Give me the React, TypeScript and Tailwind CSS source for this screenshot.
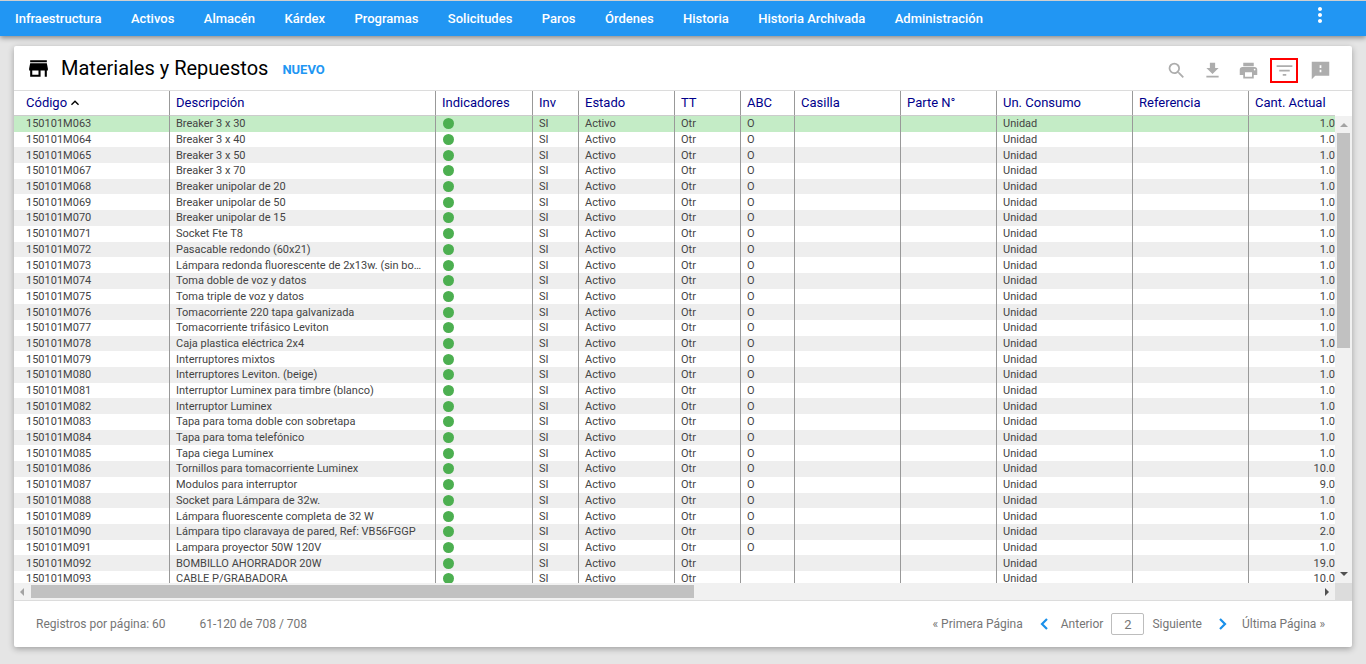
import {
  MdFileDownload,
  MdFilterList,
  MdKeyboardArrowUp,
  MdMoreVert,
  MdPrint,
  MdSearch,
  MdStore,
} from "react-icons/md";

const menu = [
  "Infraestructura",
  "Activos",
  "Almacén",
  "Kárdex",
  "Programas",
  "Solicitudes",
  "Paros",
  "Órdenes",
  "Historia",
  "Historia Archivada",
  "Administración",
];

const columns = [
  { title: "Código", width: "w-[155px]" },
  { title: "Descripción", width: "w-[266px]" },
  { title: "Indicadores", width: "w-[97px]" },
  { title: "Inv", width: "w-[46px]" },
  { title: "Estado", width: "w-[96px]" },
  { title: "TT", width: "w-[66px]" },
  { title: "ABC", width: "w-[54px]" },
  { title: "Casilla", width: "w-[106px]" },
  { title: "Parte N°", width: "w-[96px]" },
  { title: "Un. Consumo", width: "w-[136px]" },
  { title: "Referencia", width: "w-[116px]" },
  { title: "Cant. Actual", width: "" },
];

interface Item {
  code: string;
  name: string;
  abc?: string;
  qty: string;
}

const items: Item[] = [
  { code: "150101M063", name: "Breaker 3 x 30", abc: "O", qty: "1.0" },
  { code: "150101M064", name: "Breaker 3 x 40", abc: "O", qty: "1.0" },
  { code: "150101M065", name: "Breaker 3 x 50", abc: "O", qty: "1.0" },
  { code: "150101M067", name: "Breaker 3 x 70", abc: "O", qty: "1.0" },
  { code: "150101M068", name: "Breaker unipolar de 20", abc: "O", qty: "1.0" },
  { code: "150101M069", name: "Breaker unipolar de 50", abc: "O", qty: "1.0" },
  { code: "150101M070", name: "Breaker unipolar de 15", abc: "O", qty: "1.0" },
  { code: "150101M071", name: "Socket Fte T8", abc: "O", qty: "1.0" },
  { code: "150101M072", name: "Pasacable redondo (60x21)", abc: "O", qty: "1.0" },
  { code: "150101M073", name: "Lámpara redonda fluorescente de 2x13w. (sin bombillo)", abc: "O", qty: "1.0" },
  { code: "150101M074", name: "Toma doble de voz y datos", abc: "O", qty: "1.0" },
  { code: "150101M075", name: "Toma triple de voz y datos", abc: "O", qty: "1.0" },
  { code: "150101M076", name: "Tomacorriente 220 tapa galvanizada", abc: "O", qty: "1.0" },
  { code: "150101M077", name: "Tomacorriente trifásico Leviton", abc: "O", qty: "1.0" },
  { code: "150101M078", name: "Caja plastica eléctrica 2x4", abc: "O", qty: "1.0" },
  { code: "150101M079", name: "Interruptores mixtos", abc: "O", qty: "1.0" },
  { code: "150101M080", name: "Interruptores Leviton. (beige)", abc: "O", qty: "1.0" },
  { code: "150101M081", name: "Interruptor Luminex para timbre (blanco)", abc: "O", qty: "1.0" },
  { code: "150101M082", name: "Interruptor Luminex", abc: "O", qty: "1.0" },
  { code: "150101M083", name: "Tapa para toma doble con sobretapa", abc: "O", qty: "1.0" },
  { code: "150101M084", name: "Tapa para toma telefónico", abc: "O", qty: "1.0" },
  { code: "150101M085", name: "Tapa ciega Luminex", abc: "O", qty: "1.0" },
  { code: "150101M086", name: "Tornillos para tomacorriente Luminex", abc: "O", qty: "10.0" },
  { code: "150101M087", name: "Modulos para interruptor", abc: "O", qty: "9.0" },
  { code: "150101M088", name: "Socket para Lámpara de 32w.", abc: "O", qty: "1.0" },
  { code: "150101M089", name: "Lámpara fluorescente completa de 32 W", abc: "O", qty: "1.0" },
  { code: "150101M090", name: "Lámpara tipo claravaya de pared, Ref: VB56FGGP", abc: "O", qty: "2.0" },
  { code: "150101M091", name: "Lampara proyector 50W 120V", abc: "O", qty: "1.0" },
  { code: "150101M092", name: "BOMBILLO AHORRADOR 20W", qty: "19.0" },
  { code: "150101M093", name: "CABLE P/GRABADORA", qty: "10.0" },
];

function Navbar() {
  return (
    <nav className="relative flex h-9 shrink-0 items-center justify-between border-t border-[#cfcfcf] bg-[#2196f3] pl-[15px] pr-[34px] text-white shadow-[0_2px_5px_rgba(0,0,0,0.4)]">
      <div className="flex w-[968px] items-center justify-between">
        {menu.map((label) => (
          <a key={label} href="#" className="whitespace-nowrap text-[13px] font-medium">
            {label}
          </a>
        ))}
      </div>
      <button type="button" aria-label="Más opciones" className="mb-2">
        <MdMoreVert className="size-6" />
      </button>
    </nav>
  );
}

function FeedbackIcon() {
  return (
    <svg viewBox="0 0 24 24" className="size-[21px]" fill="currentColor">
      <path d="M22 2H2v20l4-4h16V2zM13 14h-2v-3h2v3zm0-5h-2V6h2v3z" />
    </svg>
  );
}

function Toolbar() {
  const iconButton = "flex h-[25px] w-7 items-center justify-center";
  return (
    <header className="flex h-[45px] shrink-0 items-center border-b border-[#dcdcdc] pl-3 pr-[18px]">
      <MdStore className="size-[25px] text-black" />
      <h1 className="ml-2.5 text-xl text-black">Materiales y Repuestos</h1>
      <button type="button" className="ml-[14px] mt-1 text-[13px] font-bold text-[#2196f3]">
        NUEVO
      </button>
      <div className="ml-auto mt-[5px] flex items-center gap-2 text-[#adadad]">
        <button type="button" aria-label="Buscar" className={iconButton}>
          <MdSearch className="size-[21px]" />
        </button>
        <button type="button" aria-label="Descargar" className={iconButton}>
          <MdFileDownload className="size-[21px]" />
        </button>
        <button type="button" aria-label="Imprimir" className={iconButton}>
          <MdPrint className="size-[21px]" />
        </button>
        <button type="button" aria-label="Filtrar" className={`${iconButton} border-2 border-[#ff0000]`}>
          <MdFilterList className="size-[21px]" />
        </button>
        <button type="button" aria-label="Comentarios" className={iconButton}>
          <FeedbackIcon />
        </button>
      </div>
    </header>
  );
}

function rowColor(index: number) {
  if (index === 0) return "bg-[#c4ecc6]";
  return index % 2 === 0 ? "bg-[#eeeeee]" : "bg-white";
}

function MaterialsTable() {
  const cell = "border-l border-[#999999] p-0 pl-1.5";
  return (
    <table className="h-[496px] w-full table-fixed border-separate border-spacing-0 text-[11px] leading-[15px] text-[#444444]">
      <thead>
        <tr className="h-[25px]">
          {columns.map((col, i) => (
            <th
              key={col.title}
              scope="col"
              className={`${col.width} ${
                i === 0 ? "pl-3" : "border-l border-l-[#999999] pl-1.5"
              } whitespace-nowrap border-b border-b-[#cccccc] pb-0.5 pt-0 text-left text-[13px] font-normal text-[#00008b]`}
            >
              <span className="flex items-center">
                {col.title}
                {i === 0 && <MdKeyboardArrowUp className="mt-0.5 size-4 text-black" />}
              </span>
            </th>
          ))}
        </tr>
      </thead>
      <tbody>
        {items.map((item, i) => (
          <tr key={item.code} className={rowColor(i)}>
            <td className="p-0 pl-3">{item.code}</td>
            <td className={`${cell} truncate pr-2.5`}>{item.name}</td>
            <td className={cell}>
              <span className="ml-px block size-[11px] rounded-full bg-[#4caf50]" />
            </td>
            <td className={cell}>SI</td>
            <td className={cell}>Activo</td>
            <td className={cell}>Otr</td>
            <td className={cell}>{item.abc}</td>
            <td className={cell} />
            <td className={cell} />
            <td className={cell}>Unidad</td>
            <td className={cell} />
            <td className={`${cell} text-right`}>{item.qty}</td>
          </tr>
        ))}
      </tbody>
    </table>
  );
}

function VerticalScrollbar() {
  return (
    <div className="mt-[25px] flex w-[17px] shrink-0 flex-col items-center bg-[#f1f1f1]">
      <svg viewBox="0 0 17 17" className="size-[17px] shrink-0" fill="#a3a3a3">
        <path d="M5 11h8L9 7z" />
      </svg>
      <div className="flex-1">
        <div className="h-[215px] w-[13px] bg-[#c1c1c1]" />
      </div>
      <svg viewBox="0 0 17 17" className="size-[17px] shrink-0" fill="#505050">
        <path d="M5 6h8l-4 4z" />
      </svg>
    </div>
  );
}

function HorizontalScrollbar() {
  return (
    <div className="flex h-[17px] shrink-0 bg-[#dcdcdc]">
      <div className="flex flex-1 items-center bg-[#f1f1f1]">
        <svg viewBox="0 0 17 17" className="size-[17px] shrink-0" fill="#a3a3a3">
          <path d="M10 5v8L6 9z" />
        </svg>
        <div className="flex-1">
          <div className="h-[13px] w-[663px] bg-[#c1c1c1]" />
        </div>
        <svg viewBox="0 0 17 17" className="size-[17px] shrink-0" fill="#505050">
          <path d="M7 5v8l4-4z" />
        </svg>
      </div>
      <div className="w-[17px]" />
    </div>
  );
}

function Pagination() {
  return (
    <footer className="flex h-[47px] shrink-0 items-center rounded-b-xs border-t border-[#dcdcdc] pl-[22px] pr-[27px] text-xs text-[#757575]">
      <span>Registros por página: 60</span>
      <span className="ml-[34px]">61-120 de 708 / 708</span>
      <div className="ml-auto flex items-center">
        <button type="button">« Primera Página</button>
        <button type="button" className="ml-4 flex items-center gap-3">
          <svg viewBox="0 0 10 12" className="h-3 w-2.5" fill="none" stroke="#1a90ea" strokeWidth="2.200">
            <path d="M8 1L3 6l5 5" />
          </svg>
          Anterior
        </button>
        <input
          type="text"
          aria-label="Página"
          defaultValue="2"
          className="mx-2 h-[22px] w-[33px] rounded-xs border border-[#bdbdbd] bg-white text-center text-[13px]"
        />
        <button type="button" className="flex items-center gap-4">
          Siguiente
          <svg viewBox="0 0 10 12" className="h-3 w-2.5" fill="none" stroke="#1a90ea" strokeWidth="2.200">
            <path d="M2 1l5 5-5 5" />
          </svg>
        </button>
        <button type="button" className="ml-3.5">Última Página »</button>
      </div>
    </footer>
  );
}

export default function App() {
  return (
    <div className="flex h-screen flex-col bg-[#e5e5e5] font-[Roboto,sans-serif]">
      <Navbar />
      <main className="flex min-h-0 flex-1 px-3.5 pb-[17px] pt-2.5">
        <section className="flex min-w-0 flex-1 flex-col rounded-xs bg-white shadow-[0_2px_6px_rgba(0,0,0,0.3)]">
          <Toolbar />
          <div className="flex min-h-0 flex-1">
            <div className="min-w-0 flex-1 overflow-hidden">
              <MaterialsTable />
            </div>
            <VerticalScrollbar />
          </div>
          <HorizontalScrollbar />
          <Pagination />
        </section>
      </main>
    </div>
  );
}
